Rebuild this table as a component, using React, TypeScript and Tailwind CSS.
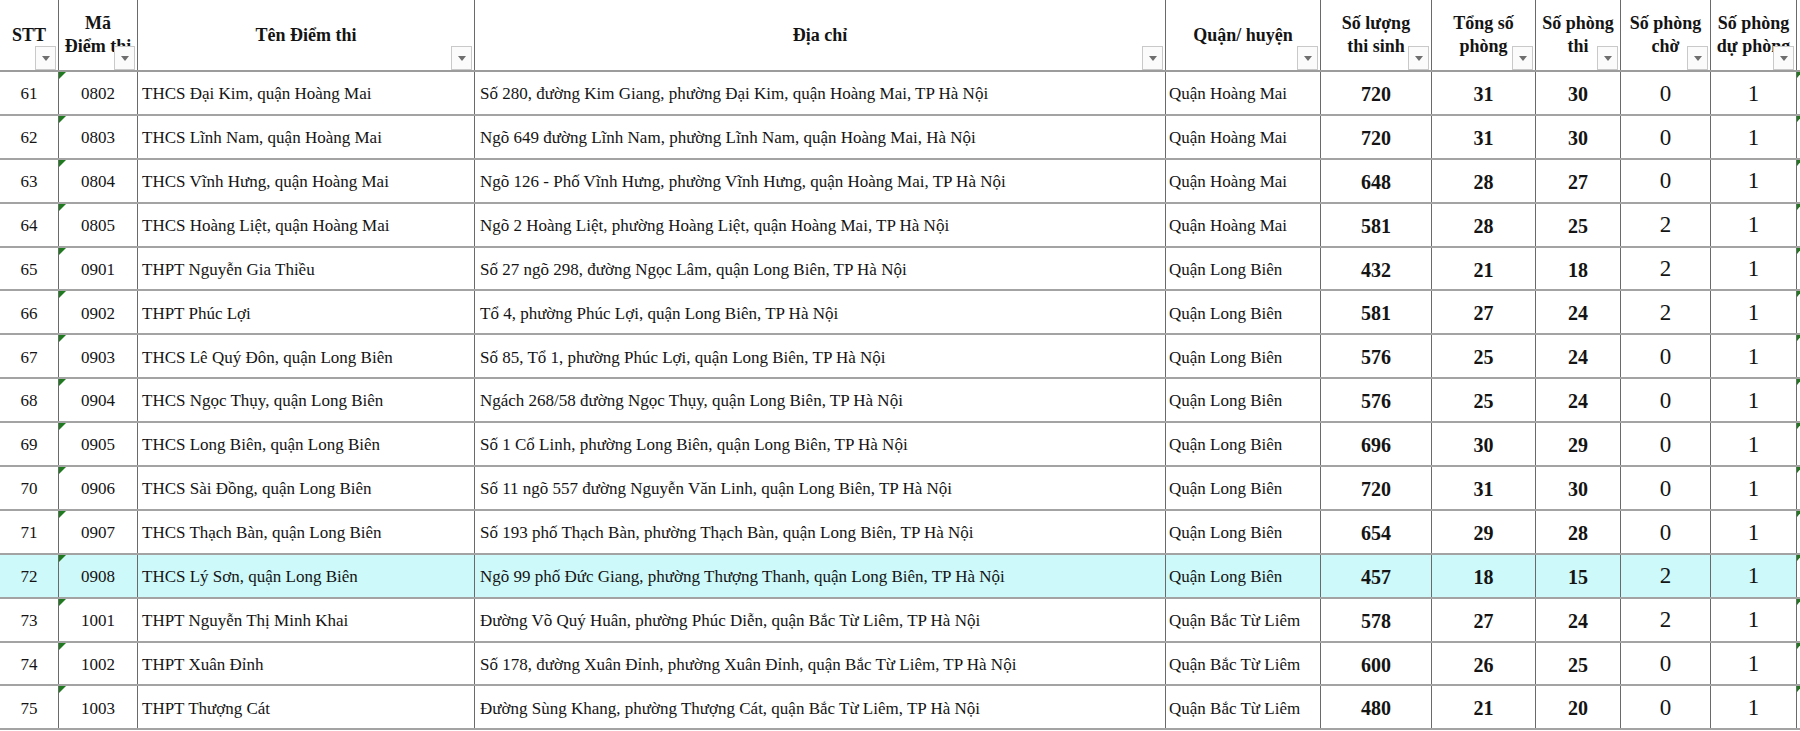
const cols = "grid-cols-[59px_79px_337px_691px_155px_111px_104px_85px_90px_86px_3px]";

const headers: string[][] = [
  ["STT"],
  ["Mã", "Điểm thi"],
  ["Tên Điểm thi"],
  ["Địa chỉ"],
  ["Quận/ huyện"],
  ["Số lượng", "thi sinh"],
  ["Tổng số", "phòng"],
  ["Số phòng", "thi"],
  ["Số phòng", "chờ"],
  ["Số phòng", "dự phòng"],
];

type Row = [string, string, string, string, string, string, string, string, string, string];

const rows: Row[] = [
  ["61", "0802", "THCS Đại Kim, quận Hoàng Mai", "Số 280, đường Kim Giang, phường Đại Kim, quận Hoàng Mai, TP Hà Nội", "Quận Hoàng Mai", "720", "31", "30", "0", "1"],
  ["62", "0803", "THCS Lĩnh Nam, quận Hoàng Mai", "Ngõ 649 đường Lĩnh Nam, phường Lĩnh Nam, quận Hoàng Mai, Hà Nội", "Quận Hoàng Mai", "720", "31", "30", "0", "1"],
  ["63", "0804", "THCS Vĩnh Hưng, quận Hoàng Mai", "Ngõ 126 - Phố Vĩnh Hưng, phường Vĩnh Hưng, quận Hoàng Mai, TP Hà Nội", "Quận Hoàng Mai", "648", "28", "27", "0", "1"],
  ["64", "0805", "THCS Hoàng Liệt, quận Hoàng Mai", "Ngõ 2 Hoàng Liệt, phường Hoàng Liệt, quận Hoàng Mai, TP Hà Nội", "Quận Hoàng Mai", "581", "28", "25", "2", "1"],
  ["65", "0901", "THPT Nguyễn Gia Thiều", "Số 27 ngõ 298, đường Ngọc Lâm, quận Long Biên, TP Hà Nội", "Quận Long Biên", "432", "21", "18", "2", "1"],
  ["66", "0902", "THPT Phúc Lợi", "Tổ 4, phường Phúc Lợi, quận Long Biên, TP Hà Nội", "Quận Long Biên", "581", "27", "24", "2", "1"],
  ["67", "0903", "THCS Lê Quý Đôn, quận Long Biên", "Số 85, Tổ 1, phường Phúc Lợi, quận Long Biên, TP Hà Nội", "Quận Long Biên", "576", "25", "24", "0", "1"],
  ["68", "0904", "THCS Ngọc Thụy, quận Long Biên", "Ngách 268/58 đường Ngọc Thụy, quận Long Biên, TP Hà Nội", "Quận Long Biên", "576", "25", "24", "0", "1"],
  ["69", "0905", "THCS Long Biên, quận Long Biên", "Số 1 Cổ Linh, phường Long Biên, quận Long Biên, TP Hà Nội", "Quận Long Biên", "696", "30", "29", "0", "1"],
  ["70", "0906", "THCS Sài Đồng, quận Long Biên", "Số 11 ngõ 557 đường Nguyễn Văn Linh, quận Long Biên, TP Hà Nội", "Quận Long Biên", "720", "31", "30", "0", "1"],
  ["71", "0907", "THCS Thạch Bàn, quận Long Biên", "Số 193 phố Thạch Bàn, phường Thạch Bàn, quận Long Biên, TP Hà Nội", "Quận Long Biên", "654", "29", "28", "0", "1"],
  ["72", "0908", "THCS Lý Sơn, quận Long Biên", "Ngõ 99 phố Đức Giang, phường Thượng Thanh, quận Long Biên, TP Hà Nội", "Quận Long Biên", "457", "18", "15", "2", "1"],
  ["73", "1001", "THPT Nguyễn Thị Minh Khai", "Đường Võ Quý Huân, phường Phúc Diễn, quận Bắc Từ Liêm, TP Hà Nội", "Quận Bắc Từ Liêm", "578", "27", "24", "2", "1"],
  ["74", "1002", "THPT Xuân Đỉnh", "Số 178, đường Xuân Đỉnh, phường Xuân Đỉnh, quận Bắc Từ Liêm, TP Hà Nội", "Quận Bắc Từ Liêm", "600", "26", "25", "0", "1"],
  ["75", "1003", "THPT Thượng Cát", "Đường Sùng Khang, phường Thượng Cát, quận Bắc Từ Liêm, TP Hà Nội", "Quận Bắc Từ Liêm", "480", "21", "20", "0", "1"],
];

function FilterButton() {
  return (
    <div className="absolute bottom-0 right-[2px] z-10 flex h-[24px] w-[21px] items-center justify-center border border-[#c9c9c9] bg-[#fbfbfb]">
      <svg width="8" height="5" viewBox="0 0 8 5">
        <path d="M0 0 L8 0 L4 5 Z" fill="#6e6e6e" />
      </svg>
    </div>
  );
}

function GreenMark() {
  return (
    <svg className="absolute left-0 top-0" width="7" height="7" viewBox="0 0 7 7">
      <path d="M0 0 L7 0 L0 7 Z" fill="#1f7a1f" />
    </svg>
  );
}

export default function App() {
  return (
    <div className="h-[731px] w-[1800px] overflow-hidden bg-white font-['Liberation_Serif','Times_New_Roman',serif] text-[#141414]">
      <div className={`grid ${cols} h-[72px] border-b-2 border-[#9c9c9c]`}>
        {headers.map((lines, i) => (
          <div key={i} className="relative flex flex-col items-center justify-center border-r border-[#6a6a6a] text-center text-[18px] font-bold leading-[23px]">
            {lines.map((l) => (
              <span key={l} className="whitespace-nowrap">{l}</span>
            ))}
            <FilterButton />
          </div>
        ))}
        <div />
      </div>

      {rows.map((r) => {
        const hl = r[0] === "72";
        return (
          <div key={r[0]} className={`grid ${cols} h-[43.9px] border-b-2 border-[#a3a3a3] ${hl ? "bg-[#cdf9fa]" : ""}`}>
            <div className="flex items-center justify-center border-r border-[#6a6a6a] pt-[2px] text-[17px]">{r[0]}</div>
            <div className="relative flex items-center justify-center border-r border-[#6a6a6a] pt-[2px] text-[17px]">
              <GreenMark />
              {r[1]}
            </div>
            <div className="flex items-center overflow-hidden whitespace-nowrap border-r border-[#6a6a6a] pl-[4px] pt-[2px] text-[17px]">{r[2]}</div>
            <div className="flex items-center overflow-hidden whitespace-nowrap border-r border-[#6a6a6a] pl-[5px] pt-[2px] text-[17px]">{r[3]}</div>
            <div className="flex items-center overflow-hidden whitespace-nowrap border-r border-[#6a6a6a] pl-[3px] pt-[2px] text-[17px]">{r[4]}</div>
            <div className="flex items-center justify-center border-r border-[#6a6a6a] pt-[2px] text-[20px] font-bold">{r[5]}</div>
            <div className="flex items-center justify-center border-r border-[#6a6a6a] pt-[2px] text-[20px] font-bold">{r[6]}</div>
            <div className="flex items-center justify-center border-r border-[#6a6a6a] pt-[2px] text-[20px] font-bold">{r[7]}</div>
            <div className="flex items-center justify-center border-r border-[#6a6a6a] pt-[2px] text-[23px]">{r[8]}</div>
            <div className="flex items-center justify-center border-r border-[#6a6a6a] pt-[2px] text-[23px]">{r[9]}</div>
            <div className="relative bg-white">
              <svg className="absolute left-0 top-0" width="5" height="6" viewBox="0 0 5 6">
                <path d="M0 0 L5 0 L0 6 Z" fill="#1f7a1f" />
              </svg>
            </div>
          </div>
        );
      })}
    </div>
  );
}
